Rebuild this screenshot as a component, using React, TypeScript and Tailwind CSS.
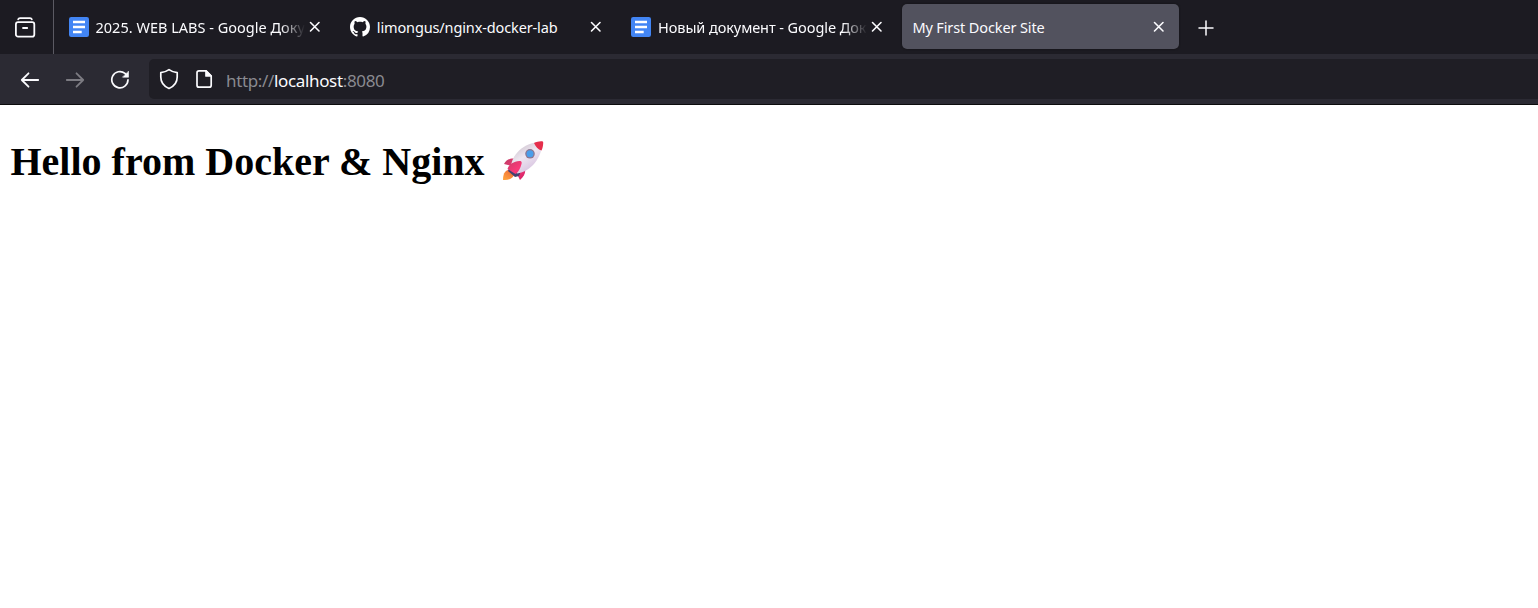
import type { ReactNode } from "react";

function CloseIcon() {
  return (
    <svg width="12" height="12" viewBox="0 0 12 12" fill="none" stroke="#fbfbfe" strokeWidth="1.6" strokeLinecap="round" className="shrink-0">
      <path d="M1.500 1.500l8.500 8.500M10 1.500L1.500 10" />
    </svg>
  );
}

function DocsIcon() {
  return (
    <svg width="20" height="20" viewBox="0 0 20 20" className="shrink-0">
      <rect width="20" height="20" rx="2.2" fill="#4285f4" />
      <path d="M4 5h12M4 10h12M4 15h8.700" stroke="#fff" strokeWidth="2.3" />
    </svg>
  );
}

function GithubIcon() {
  return (
    <svg width="20" height="20" viewBox="0 0 16 16" fill="#fff" className="shrink-0">
      <path d="M8 0C3.58 0 0 3.58 0 8c0 3.54 2.29 6.53 5.47 7.59.4.07.55-.17.55-.38 0-.19-.01-.82-.01-1.49-2.01.37-2.53-.49-2.69-.94-.09-.23-.48-.94-.82-1.13-.28-.15-.68-.52-.01-.53.63-.01 1.08.58 1.23.82.72 1.21 1.87.87 2.33.66.07-.52.28-.87.51-1.07-1.78-.2-3.64-.89-3.64-3.95 0-.87.31-1.59.82-2.15-.08-.2-.36-1.02.08-2.12 0 0 .67-.21 2.2.82.64-.18 1.32-.27 2-.27s1.36.09 2 .27c1.53-1.04 2.2-.82 2.2-.82.44 1.1.16 1.92.08 2.12.51.56.82 1.27.82 2.15 0 3.07-1.87 3.75-3.65 3.95.29.25.54.73.54 1.48 0 1.07-.01 1.93-.01 2.2 0 .21.15.46.55.38A8.01 8.01 0 0 0 16 8c0-4.42-3.58-8-8-8z" />
    </svg>
  );
}

function Rocket() {
  return (
    <svg width="42" height="42" viewBox="0 0 42 42" role="img" aria-label="🚀" className="mb-[2px] shrink-0">
      <defs>
        <linearGradient id="body" x1="14" y1="8" x2="28" y2="30" gradientUnits="userSpaceOnUse">
          <stop offset="0" stopColor="#d2c8d3" />
          <stop offset=".45" stopColor="#eee7f1" />
          <stop offset="1" stopColor="#d9c5e1" />
        </linearGradient>
        <linearGradient id="fin" x1="4" y1="20" x2="20" y2="38" gradientUnits="userSpaceOnUse">
          <stop offset="0" stopColor="#c73c68" />
          <stop offset=".6" stopColor="#fa3979" />
          <stop offset="1" stopColor="#d82468" />
        </linearGradient>
        <linearGradient id="flame" x1="9" y1="30" x2="2" y2="40" gradientUnits="userSpaceOnUse">
          <stop offset="0" stopColor="#f06d38" />
          <stop offset="1" stopColor="#ffa63e" />
        </linearGradient>
      </defs>
      <path d="M6 30C2.500 31 1 34.500 1 40c6 .5 9.500-1.500 11-5z" fill="url(#flame)" />
      <path d="M13 18.500c-5-.5-8.500 1-11 5.500l8 2zM23 28c1 5-1 8-5 12l-3.500-7z" fill="url(#fin)" />
      <path d="M7 28l-1 3 7 6 4-1 2-5z" fill="#444070" />
      <path d="M8.500 28C10 15 20 2.500 40.500 1.500 40 18 29 31.500 15 33.500z" fill="url(#body)" />
      <path d="M32 3c2.500-1.200 6-2 8-1.700 1.300.2 1.300.9 1.200 2-.2 2.700-.5 5-1.700 7.200-3.500-1-6-4-7.500-7.500z" fill="#e52e4b" />
      <path d="M5.500 29c1-4 5-7.500 12-8 2 0 2.500 1 2 3-1 4-3 8-6 10z" fill="url(#fin)" />
      <circle cx="28" cy="13.800" r="4.800" fill="#8c7790" />
      <circle cx="28" cy="13.800" r="3.500" fill="#4a9eea" />
    </svg>
  );
}

function Tab({ icon, title, spacing, faded, active }: { icon?: ReactNode; title: string; spacing: string; faded?: boolean; active?: boolean }) {
  return (
    <div className={`flex h-[45px] w-[277.300px] shrink-0 items-center rounded-[5px] pl-[10.500px] pr-[14.500px] ${active ? "bg-[#52525e] shadow-[0_0_2px_#111]" : ""}`}>
      {icon}
      <div
        className={`min-w-0 flex-1 overflow-hidden whitespace-nowrap text-[14.500px] leading-[24px] text-[#fbfbfe] ${spacing} ${icon ? "ml-[7px]" : ""} ${faded ? "mr-[4px] [mask-image:linear-gradient(to_left,transparent,black_24px)]" : "mr-2"}`}
      >
        {title}
      </div>
      <CloseIcon />
    </div>
  );
}

export default function App() {
  return (
    <div className="flex h-[608px] w-full flex-col overflow-hidden bg-white font-['Noto_Sans','Open_Sans',sans-serif]">
      <header className="shrink-0">
        <div className="flex h-[54px] bg-[#1c1b22]">
          <div className="flex w-[54px] shrink-0 items-center border-r border-[#5b5a63] pl-[15px]">
            <svg width="21" height="21" viewBox="0 0 21 21" fill="none" stroke="#fbfbfe" strokeWidth="1.800" strokeLinecap="round">
              <path d="M3.200 2.300Q3.600 1.200 5 1.200H15Q16.400 1.200 16.800 2.300" />
              <rect x=".9" y="5.200" width="18.400" height="14.400" rx="2.200" />
              <path d="M8 11h4.200" />
            </svg>
          </div>
          <div className="flex gap-1 pl-1 pt-1">
            <Tab icon={<DocsIcon />} title="2025. WEB LABS - Google Документы" spacing="tracking-[0.01px]" faded />
            <Tab icon={<GithubIcon />} title="limongus/nginx-docker-lab" spacing="tracking-[-0.13px]" />
            <Tab icon={<DocsIcon />} title="Новый документ - Google Документы" spacing="tracking-[-0.08px]" faded />
            <Tab title="My First Docker Site" spacing="tracking-[-0.12px]" active />
          </div>
          <div className="flex items-center pl-[18.500px] pt-px">
            <svg width="16" height="16" viewBox="0 0 16 16" stroke="#fbfbfe" strokeWidth="1.500" strokeLinecap="round">
              <path d="M8 1v14M1 8h14" />
            </svg>
          </div>
        </div>
        <div className="flex h-[51px] items-center border-b border-[#0c0c0d] bg-[#2b2a33]">
          <div className="flex w-[149px] shrink-0 items-center gap-[25px] pl-5 pt-px">
            <svg width="20" height="20" viewBox="0 0 20 20" fill="none" stroke="#fbfbfe" strokeWidth="1.800" strokeLinecap="round" strokeLinejoin="round">
              <path d="M18.200 10H1.800M8.500 3.300L1.800 10l6.700 6.700" />
            </svg>
            <svg width="20" height="20" viewBox="0 0 20 20" fill="none" stroke="#7c7b82" strokeWidth="1.800" strokeLinecap="round" strokeLinejoin="round">
              <path d="M1.800 10h16.400M11.500 3.300l6.700 6.700-6.700 6.700" />
            </svg>
            <svg width="20" height="20" viewBox="0 0 20 20" fill="none" stroke="#fbfbfe" strokeWidth="1.700" strokeLinecap="round">
              <path d="M18 9.800A8.100 8.100 0 1 1 15 3.400l1.200 1.100" />
              <path d="M18.500 1.500v5.700h-5.700z" fill="#fbfbfe" stroke="#fbfbfe" strokeWidth=".6" strokeLinejoin="round" />
            </svg>
          </div>
          <div className="flex h-10 flex-1 items-center rounded-l-[5px] bg-[#1f1e25] pl-[10px]">
            <svg width="20" height="22" viewBox="0 0 20 22" fill="none" stroke="#fbfbfe" strokeWidth="1.700" strokeLinejoin="round" className="mr-[16px] shrink-0">
              <path d="M10 1.600Q13.500 4 18.200 4.700V9c0 4.800-2.800 9.200-8.200 11.500C4.600 18.200 1.800 13.800 1.800 9V4.700Q6.500 4 10 1.600z" />
            </svg>
            <svg width="18" height="20" viewBox="0 0 18 20" fill="none" stroke="#fbfbfe" strokeWidth="1.700" strokeLinejoin="round" className="mr-[13px] shrink-0">
              <path d="M4 1.800H11l5.200 5.200v9.200q0 2-2 2H4q-2 0-2-2V3.800q0-2 2-2z" />
              <path d="M11 1.800V7h5.200z" fill="#fbfbfe" />
            </svg>
            <div className="whitespace-nowrap pt-[3px] text-[17px] leading-6 tracking-[-0.35px] text-[#8a8a90]">
              http://<span className="text-[#fbfbfe]">localhost</span>:8080
            </div>
          </div>
        </div>
      </header>
      <main className="px-[10.500px] pt-[34px]">
        <h1 className="flex items-center whitespace-nowrap font-['Liberation_Serif',serif] text-[40px] font-bold leading-[46px] text-black">
          <span className="mr-[17px]">Hello from Docker &amp; Nginx</span>
          <Rocket />
        </h1>
      </main>
    </div>
  );
}
